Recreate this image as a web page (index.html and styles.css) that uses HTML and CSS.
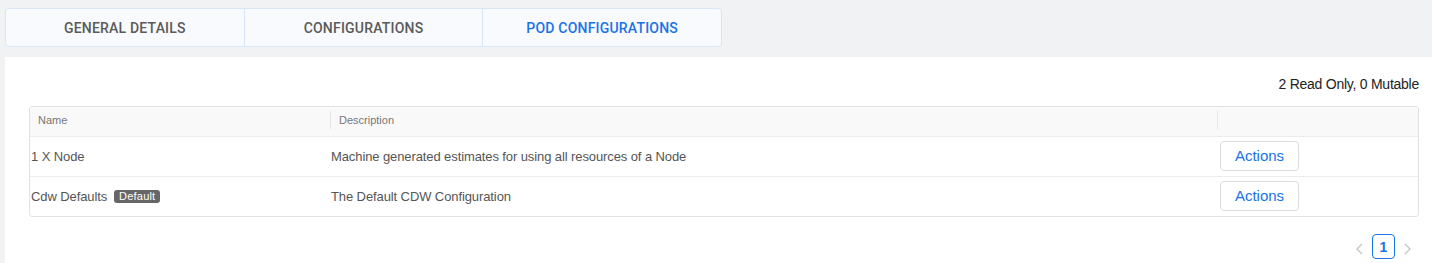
FILE: index.html
```html
<!DOCTYPE html>
<html lang="en">
<head>
  <meta charset="UTF-8" />
  <title>Pod Configurations</title>
  <link rel="stylesheet" href="styles.css">
</head>
<body>
  <div class="tabs">
    <div class="tab">General Details</div>
    <div class="tab">Configurations</div>
    <div class="tab active">Pod Configurations</div>
  </div>

  <div class="panel">
    <div class="summary">2 Read Only, 0 Mutable</div>

    <div class="table">
      <div class="row head">
        <div class="cell name">Name</div>
        <div class="cell desc">Description</div>
        <div class="cell act"></div>
      </div>
      <div class="row">
        <div class="cell name">1 X Node</div>
        <div class="cell desc">Machine generated estimates for using all resources of a Node</div>
        <div class="cell act"><button class="actions">Actions</button></div>
      </div>
      <div class="row">
        <div class="cell name">Cdw Defaults <span class="badge">Default</span></div>
        <div class="cell desc">The Default CDW Configuration</div>
        <div class="cell act"><button class="actions">Actions</button></div>
      </div>
    </div>

    <div class="pager">
      <svg class="arrow" width="8" height="12" viewBox="0 0 8 12"><path d="M7 1 L2 6 L7 11" fill="none" stroke="#c4c4c4" stroke-width="1.3"/></svg>
      <span class="page">1</span>
      <svg class="arrow" width="8" height="12" viewBox="0 0 8 12"><path d="M1 1 L6 6 L1 11" fill="none" stroke="#c4c4c4" stroke-width="1.3"/></svg>
    </div>
  </div>
</body>
</html>
```

FILE: styles.css
```css
body {
  margin: 0;
  background: #f1f2f3;
  font-family: "Liberation Sans", Arial, sans-serif;
  color: #555;
}
.tabs {
  display: flex;
  margin: 8px 0 0 5px;
  width: 717px;
  height: 39px;
  box-sizing: border-box;
  border: 1px solid #d8e5f6;
  border-radius: 4px;
  background: #f8fafd;
}
.tab {
  flex: 1;
  display: flex;
  align-items: center;
  justify-content: center;
  font-family: Roboto, sans-serif;
  font-weight: 500;
  font-size: 14px;
  letter-spacing: 0.2px;
  text-transform: uppercase;
  color: #5a5a5a;
}
.tab + .tab {
  border-left: 1px solid #d8e5f6;
}
.tab.active {
  color: #1a73e8;
}
.panel {
  margin: 10px 0 0 5px;
  background: #fff;
  padding: 18px 13px 8px 24px;
  height: 180px;
}
.summary {
  text-align: right;
  font-size: 14px;
  letter-spacing: -0.25px;
  color: #222;
  height: 31px;
  line-height: 18px;
}
.table {
  border: 1px solid #e2e2e2;
  border-radius: 3px;
  font-size: 13px;
  letter-spacing: -0.1px;
}
.row {
  display: flex;
  height: 39px;
  align-items: center;
  border-top: 1px solid #ececec;
}
.row.head {
  border-top: none;
  height: 30px;
  padding-bottom: 3px;
  box-sizing: border-box;
  background: #f9f9fa;
  font-size: 11px;
  letter-spacing: 0;
  color: #777;
  border-bottom: 1px solid #ececec;
}
.row.head + .row {
  border-top: none;
}
.cell {
  box-sizing: border-box;
}
.cell.name {
  width: 300px;
  padding-left: 1px;
  display: flex;
  align-items: center;
}
.cell.desc {
  flex: 1;
  padding-left: 1px;
}
.cell.act {
  width: 201px;
  padding-left: 3px;
  padding-bottom: 2px;
}
.row.head .cell {
  padding: 0 0 0 8px;
  border-left: 1px solid #e6e6e6;
  height: 18px;
  line-height: 18px;
}
.row.head .cell.name {
  border-left: none;
}
.badge {
  margin-left: 7px;
  background: #666;
  color: #fff;
  font-size: 11px;
  line-height: 13px;
  padding: 0 5px;
  letter-spacing: 0.2px;
  border-radius: 3px;
  font-weight: 500;
}
.actions {
  width: 79px;
  height: 30px;
  background: #fff;
  border: 1px solid #dcdcdc;
  border-radius: 4px;
  color: #1a73e8;
  font-family: "Liberation Sans", Arial, sans-serif;
  font-size: 15px;
  cursor: pointer;
}
.pager {
  display: flex;
  justify-content: flex-end;
  align-items: center;
  gap: 9px;
  margin-top: 17px;
  padding-right: 7px;
}
.arrow {
  display: block;
  margin-top: 4px;
}
.page {
  width: 23px;
  height: 25px;
  box-sizing: border-box;
  border: 1px solid #1a73e8;
  border-radius: 4px;
  color: #1a73e8;
  font-weight: bold;
  font-size: 14px;
  display: flex;
  align-items: center;
  justify-content: center;
}
```
